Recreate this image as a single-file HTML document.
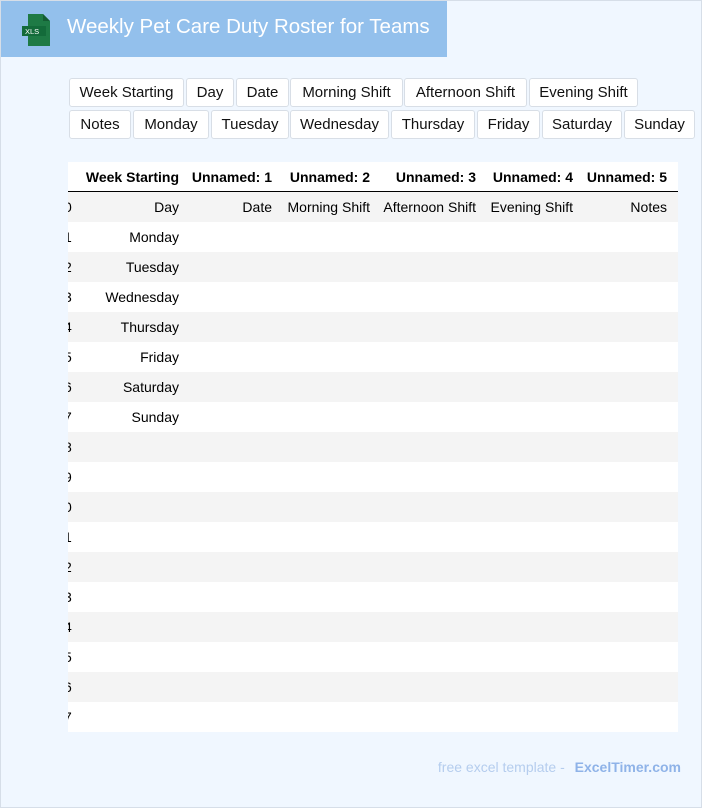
<!DOCTYPE html>
<html><head><style>
body{margin:0;width:702px;height:808px;overflow:hidden;font-family:"Liberation Sans",Arial,sans-serif;}
.page{position:absolute;left:0;top:0;width:702px;height:808px;background:#f0f7ff;box-shadow:inset 0 0 0 1px #d6dee8;}
.hdr{position:absolute;left:1px;top:1px;width:446px;height:56px;background:#93c0ec;}
.hdr .t{position:absolute;left:66px;top:14px;font-size:20.5px;color:#fff;}
.b{position:absolute;height:27px;background:#fff;border:1px solid #d8dee6;border-radius:3px;font-size:15px;line-height:27px;text-align:center;color:#111;box-sizing:content-box;}
.tbl{position:absolute;left:68px;top:162px;width:610px;}
.row{position:relative;height:30px;font-size:14px;}
.row span{position:absolute;top:7px;white-space:nowrap;}
.g{background:#f4f4f4}.w{background:#fff}
.hr{font-weight:bold;border-bottom:1.5px solid #000;height:29px;background:#fff}
.ft{position:absolute;right:21px;top:759px;font-size:14px;color:#b5cdee;}
.ft b{color:#8fb3e8;margin-left:6px}
</style></head><body><div class="page">
<div class="hdr">
<svg style="position:absolute;left:21px;top:13px" width="30" height="32" viewBox="0 0 30 32"><path d="M6 0h15l7 7v25H6z" fill="#1e7a45"/><path d="M21 0v7h7z" fill="#145c33"/><rect x="0" y="12" width="24" height="10" fill="#136b3a"/><text x="3" y="20" font-size="7.5" fill="#fff" font-family="Liberation Sans">XLS</text></svg>
<div class="t">Weekly Pet Care Duty Roster for Teams</div></div>
<div class="b" style="left:69px;top:78px;width:113px">Week Starting</div>
<div class="b" style="left:186px;top:78px;width:46px">Day</div>
<div class="b" style="left:236px;top:78px;width:51px">Date</div>
<div class="b" style="left:290px;top:78px;width:111px">Morning Shift</div>
<div class="b" style="left:404px;top:78px;width:121px">Afternoon Shift</div>
<div class="b" style="left:529px;top:78px;width:107px">Evening Shift</div>
<div class="b" style="left:69px;top:110px;width:60px">Notes</div>
<div class="b" style="left:133px;top:110px;width:74px">Monday</div>
<div class="b" style="left:211px;top:110px;width:76px">Tuesday</div>
<div class="b" style="left:290px;top:110px;width:97px">Wednesday</div>
<div class="b" style="left:391px;top:110px;width:82px">Thursday</div>
<div class="b" style="left:477px;top:110px;width:61px">Friday</div>
<div class="b" style="left:542px;top:110px;width:78px">Saturday</div>
<div class="b" style="left:624px;top:110px;width:69px">Sunday</div>
<div class="tbl">
<div class="row hr"><span style="right:499px">Week Starting</span><span style="right:406px">Unnamed: 1</span><span style="right:308px">Unnamed: 2</span><span style="right:202px">Unnamed: 3</span><span style="right:105px">Unnamed: 4</span><span style="right:11px">Unnamed: 5</span></div>
<div class="row g"><span style="left:-4px">0</span><span style="right:499px">Day</span><span style="right:406px">Date</span><span style="right:308px">Morning Shift</span><span style="right:202px">Afternoon Shift</span><span style="right:105px">Evening Shift</span><span style="right:11px">Notes</span></div>
<div class="row w"><span style="left:-4px">1</span><span style="right:499px">Monday</span></div>
<div class="row g"><span style="left:-4px">2</span><span style="right:499px">Tuesday</span></div>
<div class="row w"><span style="left:-4px">3</span><span style="right:499px">Wednesday</span></div>
<div class="row g"><span style="left:-4px">4</span><span style="right:499px">Thursday</span></div>
<div class="row w"><span style="left:-4px">5</span><span style="right:499px">Friday</span></div>
<div class="row g"><span style="left:-4px">6</span><span style="right:499px">Saturday</span></div>
<div class="row w"><span style="left:-4px">7</span><span style="right:499px">Sunday</span></div>
<div class="row g"><span style="left:-4px">8</span></div>
<div class="row w"><span style="left:-4px">9</span></div>
<div class="row g"><span style="left:-4px">0</span></div>
<div class="row w"><span style="left:-4px">1</span></div>
<div class="row g"><span style="left:-4px">2</span></div>
<div class="row w"><span style="left:-4px">3</span></div>
<div class="row g"><span style="left:-4px">4</span></div>
<div class="row w"><span style="left:-4px">5</span></div>
<div class="row g"><span style="left:-4px">6</span></div>
<div class="row w"><span style="left:-4px">7</span></div>
</div>
<div style="position:absolute;left:1px;top:162px;width:67px;height:572px;background:#f0f7ff"></div>
<div class="ft">free excel template - <b>ExcelTimer.com</b></div>
</div></body></html>
